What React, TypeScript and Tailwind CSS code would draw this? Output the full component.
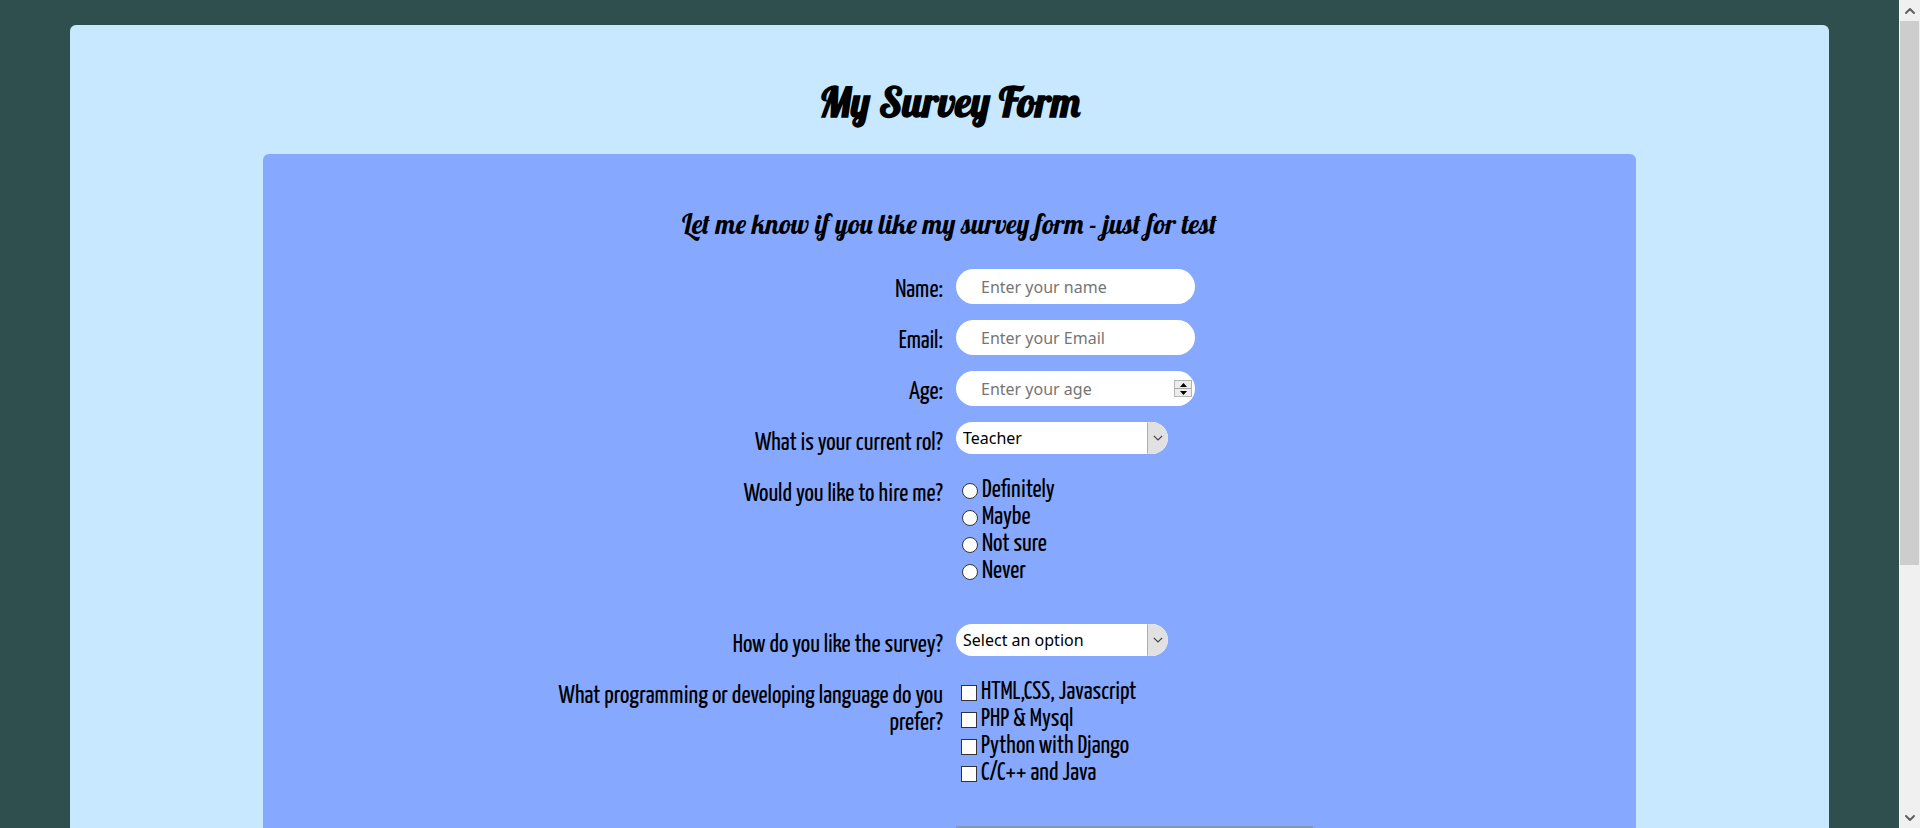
import type { ReactNode } from "react";
import { ChevronDown, ChevronUp } from "lucide-react";

const inputClass =
  "block h-[35px] w-[239px] appearance-none rounded-full bg-white px-[25px] font-['Noto_Sans',sans-serif] text-base text-black outline-none placeholder:text-[#757575]";

function Row({ label, htmlFor, group, children }: { label?: string; htmlFor?: string; group?: string; children: ReactNode }) {
  return (
    <div className="flex gap-[13px]">
      <div className="flex flex-1 justify-end pt-2">
        {htmlFor && (
          <label htmlFor={htmlFor} className="max-w-[412px] text-right">
            {label}
          </label>
        )}
        {group && (
          <span id={group + "-label"} className="max-w-[412px] text-right">
            {label}
          </span>
        )}
      </div>
      <div className="flex-1">{children}</div>
    </div>
  );
}

function Select({ id, options }: { id: string; options: string[] }) {
  return (
    <div className="relative mb-[3px] h-8 w-[212px] overflow-hidden rounded-full bg-white">
      <select
        id={id}
        className="h-8 w-full appearance-none bg-white pl-[7px] font-['Noto_Sans',sans-serif] text-base text-black outline-none"
      >
        {options.map((o) => (
          <option key={o}>{o}</option>
        ))}
      </select>
      <span className="pointer-events-none absolute inset-y-0 right-0 flex w-[21px] items-center justify-center rounded-r-full border border-[#e1e1e1] border-l-[#adadad] bg-[#e1e1e1]">
        <svg viewBox="0 0 10 6" className="h-1.5 w-2.5" fill="none" stroke="#444" strokeWidth="1.2">
          <path d="M0.8 0.8 L5 5 L9.2 0.8" />
        </svg>
      </span>
    </div>
  );
}

function Choices({ type, name, items }: { type: "radio" | "checkbox"; name: string; items: string[] }) {
  return (
    <div className="pt-1 pb-[23px]" role="group" aria-labelledby={name + "-label"}>
      {items.map((item) => (
        <label
          key={item}
          className={type === "radio" ? "flex w-fit items-center gap-1 pl-1.5" : "flex w-fit items-center gap-1 pl-[5px]"}
        >
          <input
            type={type}
            name={name}
            className={
              type === "radio"
                ? "size-4 appearance-none rounded-full border border-[#333] bg-white checked:border-4"
                : "size-4 appearance-none border border-[#333] bg-white checked:border-4"
            }
          />
          {item}
        </label>
      ))}
    </div>
  );
}

function AgeInput() {
  return (
    <div className="relative w-[239px]">
      <input
        id="age"
        type="number"
        placeholder="Enter your age"
        className={inputClass + " [appearance:textfield]"}
      />
      <div className="absolute top-[9px] right-[3px] flex h-[17px] w-[18px] flex-col border border-[#b4b4b4] bg-[#ececec]">
        <button type="button" aria-label="Increase age" className="flex flex-1 items-center justify-center border-b border-[#a8a8a8]">
          <svg viewBox="0 0 7 4" className="h-1 w-[7px]">
            <path d="M0 4 L3.5 0 L7 4 Z" />
          </svg>
        </button>
        <button type="button" aria-label="Decrease age" className="flex flex-1 items-center justify-center">
          <svg viewBox="0 0 7 4" className="h-1 w-[7px]">
            <path d="M0 0 L3.5 4 L7 0 Z" />
          </svg>
        </button>
      </div>
    </div>
  );
}

export default function App() {
  return (
    <div className="flex h-screen bg-[#2f4f4f] text-black">
      <main className="flex-1 overflow-y-auto px-[70px] pt-[25px] [scrollbar-width:none]">
        <div className="rounded-md bg-[#c8e8ff] pt-[52px] pb-12">
          <h1 className="text-center font-['Lobster','Liberation_Serif',serif] text-[41px] leading-[50px] font-bold">
            My Survey Form
          </h1>
          <form className="mx-[11%] mt-[27px] flex flex-col gap-4 rounded-md bg-[#86a9ff] pt-[52px] pb-12 font-['Yanone_Kaffeesatz','Lato',sans-serif] text-[25px] leading-[27px]">
            <p className="mb-[11px] text-center font-['Lobster','Liberation_Serif',serif] text-[27px] leading-9">
              Let me know if you like my survey form - just for test
            </p>
            <Row label="Name:" htmlFor="name">
              <input id="name" type="text" placeholder="Enter your name" className={inputClass} />
            </Row>
            <Row label="Email:" htmlFor="email">
              <input id="email" type="email" placeholder="Enter your Email" className={inputClass} />
            </Row>
            <Row label="Age:" htmlFor="age">
              <AgeInput />
            </Row>
            <Row label="What is your current rol?" htmlFor="role">
              <Select id="role" options={["Teacher"]} />
            </Row>
            <Row label="Would you like to hire me?" group="hire">
              <Choices type="radio" name="hire" items={["Definitely", "Maybe", "Not sure", "Never"]} />
            </Row>
            <Row label="How do you like the survey?" htmlFor="rating">
              <Select id="rating" options={["Select an option"]} />
            </Row>
            <Row label="What programming or developing language do you prefer?" group="language">
              <Choices
                type="checkbox"
                name="language"
                items={["HTML,CSS, Javascript", "PHP & Mysql", "Python with Django", "C/C++ and Java"]}
              />
            </Row>
            <Row>
              <textarea aria-label="Comments" className="block h-28 w-[357px] border-2 border-[#8497b4] bg-white" />
            </Row>
          </form>
        </div>
      </main>
      <aside aria-hidden="true" className="flex w-[21px] flex-col border-l border-white bg-[#f0f0f0]">
        <div className="flex h-[21px] items-center justify-center">
          <ChevronUp className="size-4 text-[#606060]" strokeWidth={3} />
        </div>
        <div className="flex flex-1 flex-col">
          <div className="mr-px flex-9 bg-[#cdcdcd]" />
          <div className="flex-4" />
        </div>
        <div className="flex h-[21px] items-center justify-center">
          <ChevronDown className="size-4 text-[#606060]" strokeWidth={3} />
        </div>
      </aside>
    </div>
  );
}
